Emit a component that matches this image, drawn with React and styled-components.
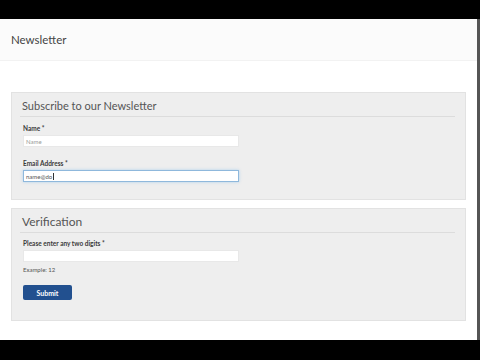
import React from 'react';
import styled, { createGlobalStyle } from 'styled-components';

const GlobalStyle = createGlobalStyle`
  html, body {
    margin: 0;
    padding: 0;
    background: #000;
  }
  body {
    font-family: Lato, "Open Sans", "Liberation Sans", sans-serif;
  }
`;

const Screen = styled.div`
  display: flex;
  flex-direction: column;
  width: 480px;
  height: 360px;
  overflow: hidden;
`;

const Letterbox = styled.div`
  height: ${props => props.$h}px;
  background: #000;
  flex: none;
`;

const Middle = styled.div`
  display: flex;
  height: 321px;
`;

const Page = styled.div`
  width: 477px;
  background: #fff;
  display: flex;
  flex-direction: column;
`;

const EdgeStrip = styled.div`
  flex: 1;
  background: #555;
`;

const Header = styled.header`
  height: 41px;
  background: #fbfbfb;
  border-bottom: 1px solid #f2f2f2;
  display: flex;
  align-items: center;
  padding-left: 11px;
  font-size: 11.5px;
  color: #444;
`;

const Content = styled.main`
  display: flex;
  flex-direction: column;
  gap: 8px;
  padding: 31px 11px 0 11px;
`;

const Panel = styled.section`
  height: ${props => props.$h}px;
  box-sizing: border-box;
  background: #eee;
  border: 1px solid #e2e2e2;
  padding: 0 10px 0 8px;
`;

const Legend = styled.div`
  font-size: ${props => props.$size}px;
  color: #555;
  line-height: 16px;
  padding: 5px 0 2px 2px;
  border-bottom: 1px solid #dcdcdc;
`;

const Fields = styled.div`
  display: flex;
  flex-direction: column;
  padding-left: 3px;
  padding-top: ${props => props.$top}px;
`;

const Label = styled.label`
  font-size: 6.5px;
  font-weight: 700;
  color: #3a3a3a;
  line-height: 9px;
  height: 9px;
`;

const Input = styled.div`
  width: 216px;
  height: 12px;
  box-sizing: border-box;
  margin-top: 2px;
  margin-bottom: ${props => props.$mb}px;
  background: #fff;
  border: 1px solid ${props => (props.$focus ? '#8fb8dc' : '#e8e8e8')};
  box-shadow: ${props => (props.$focus ? '0 0 3px rgba(102,175,233,0.45)' : 'none')};
  display: flex;
  align-items: center;
  padding-left: 2px;
  font-size: 6px;
  color: ${props => (props.$filled ? '#555' : '#999')};
`;

const Caret = styled.span`
  display: inline-block;
  width: 0.5px;
  height: 7px;
  background: #333;
  margin-left: 0.5px;
`;

const Hint = styled.div`
  font-size: 6px;
  color: #555;
  line-height: 8px;
`;

const SubmitButton = styled.button`
  width: 49px;
  height: 15px;
  margin-top: 11px;
  padding: 0;
  border: none;
  border-radius: 2px;
  background: #22508f;
  color: #fff;
  font-family: inherit;
  font-size: 7px;
  font-weight: 700;
`;

export default function App() {
  return (
    <>
      <GlobalStyle />
      <Screen>
        <Letterbox $h={19} />
        <Middle>
          <Page>
            <Header>Newsletter</Header>
            <Content>
              <Panel $h={108}>
                <Legend $size={11}>Subscribe to our Newsletter</Legend>
                <Fields $top={7}>
                  <Label>Name *</Label>
                  <Input $mb={12}>Name</Input>
                  <Label>Email Address *</Label>
                  <Input $focus $filled>
                    name@do<Caret />
                  </Input>
                </Fields>
              </Panel>
              <Panel $h={113}>
                <Legend $size={12}>Verification</Legend>
                <Fields $top={6}>
                  <Label>Please enter any two digits *</Label>
                  <Input $mb={4} />
                  <Hint>Example: 12</Hint>
                  <div>
                    <SubmitButton>Submit</SubmitButton>
                  </div>
                </Fields>
              </Panel>
            </Content>
          </Page>
          <EdgeStrip />
        </Middle>
        <Letterbox $h={20} />
      </Screen>
    </>
  );
}
